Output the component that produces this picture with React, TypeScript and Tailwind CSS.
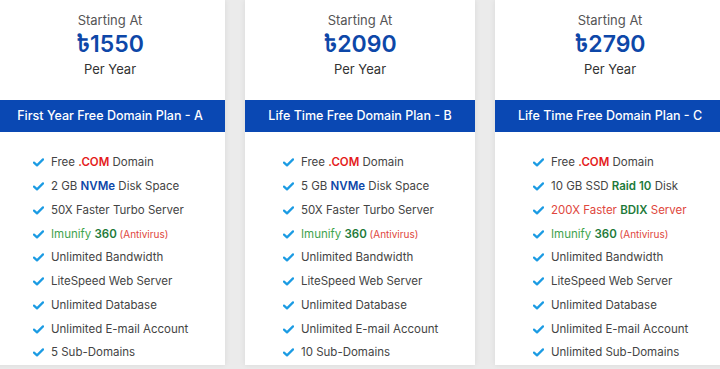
import React from 'react';

type Feature = React.ReactNode;

type Plan = {
    price: string;
    title: string;
    features: Feature[];
};

const Red = ({ children }: { children: React.ReactNode }) => (
    <span className="font-semibold text-[#e41b1b]">{children}</span>
);
const Blue = ({ children }: { children: React.ReactNode }) => (
    <span className="font-semibold text-[#0d47a8]">{children}</span>
);
const Green = ({ children }: { children: React.ReactNode }) => (
    <span className="font-semibold text-[#1d7a3a]">{children}</span>
);

const imunify = (
    <>
        <span className="text-[#3fa34d]">Imunify </span>
        <Green>360</Green>
        <span className="text-[10px] text-[#e0473d]"> (Antivirus)</span>
    </>
);

const plans: Plan[] = [
    {
        price: '1550',
        title: 'First Year Free Domain Plan - A',
        features: [
            <>Free <Red>.COM</Red> Domain</>,
            <>2 GB <Blue>NVMe</Blue> Disk Space</>,
            '50X Faster Turbo Server',
            imunify,
            'Unlimited Bandwidth',
            'LiteSpeed Web Server',
            'Unlimited Database',
            'Unlimited E-mail Account',
            '5 Sub-Domains',
        ],
    },
    {
        price: '2090',
        title: 'Life Time Free Domain Plan - B',
        features: [
            <>Free <Red>.COM</Red> Domain</>,
            <>5 GB <Blue>NVMe</Blue> Disk Space</>,
            '50X Faster Turbo Server',
            imunify,
            'Unlimited Bandwidth',
            'LiteSpeed Web Server',
            'Unlimited Database',
            'Unlimited E-mail Account',
            '10 Sub-Domains',
        ],
    },
    {
        price: '2790',
        title: 'Life Time Free Domain Plan - C',
        features: [
            <>Free <Red>.COM</Red> Domain</>,
            <>10 GB SSD <Green>Raid 10</Green> Disk</>,
            <span className="text-[#e0473d]">200X Faster <Green>BDIX</Green> Server</span>,
            imunify,
            'Unlimited Bandwidth',
            'LiteSpeed Web Server',
            'Unlimited Database',
            'Unlimited E-mail Account',
            'Unlimited Sub-Domains',
        ],
    },
];

const Check = () => (
    <svg width="11" height="9" viewBox="0 0 11 9" className="shrink-0">
        <path d="M1 4.6 L4 7.4 L10 1.4" fill="none" stroke="#1b9be3" strokeWidth="2.2" strokeLinecap="round" strokeLinejoin="round" />
    </svg>
);

const PlanCard: React.FC<{ plan: Plan }> = ({ plan }) => {
    return (
        <div className="w-[230px] shrink-0 bg-white shadow-[0_0_6px_rgba(0,0,0,0.08)]">
            <div className="flex flex-col items-center pt-[11px] h-[100px]">
                <p className="text-[13px] leading-[18px] text-[#555]">Starting At</p>
                <p className="text-[23px] leading-[28px] font-semibold text-[#0d47a8] mt-[1px]">৳{plan.price}</p>
                <p className="text-[13px] leading-[18px] text-[#333] mt-[2px]">Per Year</p>
            </div>

            <div className="h-[32px] bg-[#0a48b3] flex items-center justify-center">
                <p className="text-[12.5px] font-medium text-white">{plan.title}</p>
            </div>

            <ul className="pt-[19px] pl-[38px]">
                {plan.features.map((f, i) => (
                    <li key={i} className="flex items-center gap-[7px] h-[23.75px] text-[11.5px] text-[#444]">
                        <Check />
                        <span className="whitespace-nowrap">{f}</span>
                    </li>
                ))}
            </ul>
        </div>
    );
};

export default function App() {
    return (
        <div
            className="w-[720px] h-[369px] overflow-hidden bg-[#ebebeb]"
            style={{ fontFamily: 'Inter, "Noto Sans", "Noto Sans Bengali", "DejaVu Sans", sans-serif' }}
        >
            <div className="flex gap-5 -ml-[5px]">
                {plans.map((p) => (
                    <PlanCard key={p.title} plan={p} />
                ))}
            </div>
        </div>
    );
}
